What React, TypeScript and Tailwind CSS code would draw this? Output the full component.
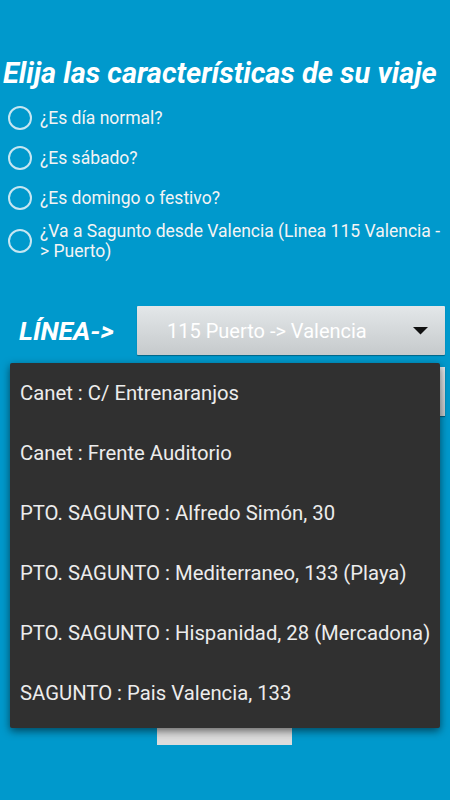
import React from 'react';

const font = { fontFamily: 'Roboto, "Noto Sans", sans-serif' };

const options = ['¿Es día normal?', '¿Es sábado?', '¿Es domingo o festivo?'];

const stops = [
  'Canet : C/ Entrenaranjos',
  'Canet : Frente Auditorio',
  'PTO. SAGUNTO : Alfredo Simón, 30',
  'PTO. SAGUNTO : Mediterraneo, 133 (Playa)',
  'PTO. SAGUNTO : Hispanidad, 28 (Mercadona)',
  'SAGUNTO : Pais Valencia, 133',
];

function Radio({ children, className = '' }: { children: React.ReactNode; className?: string }) {
  return (
    <label className={`flex items-center pl-[8px] pr-[2px] ${className}`}>
      <span className="shrink-0 w-[24px] h-[24px] rounded-full border-[2px] border-[#c6e6f2]" />
      <span className="ml-[8px] text-[17.5px] leading-[20px] text-[#f4f4f4] whitespace-nowrap">{children}</span>
    </label>
  );
}

export default function App() {
  return (
    <div className="relative w-[450px] h-[800px] overflow-hidden bg-[#0099cc]" style={font}>
      {/* Trip options */}
      <div className="pt-[53px]">
        <h1 className="pl-[3px] text-[29px] leading-[40px] font-bold italic text-white whitespace-nowrap">
          Elija las características de su viaje
        </h1>
        <div className="mt-[13px] flex flex-col gap-[16px]">
          {options.map((o) => (
            <Radio key={o}>{o}</Radio>
          ))}
        </div>
        <Radio className="mt-[11px]">
          ¿Va a Sagunto desde Valencia (Linea 115 Valencia -<br />&gt; Puerto)
        </Radio>
      </div>

      {/* Line selector */}
      <div className="mt-[45px] flex items-center">
        <span className="w-[137px] pl-[19px] text-[26.5px] font-bold italic text-white">LÍNEA-&gt;</span>
        <div className="flex-1 mr-[5px] h-[49px] flex items-center justify-between bg-gradient-to-b from-[#e3e7e9] to-[#c6cacc] shadow-[0_1px_1px_rgba(0,0,0,0.35)] rounded-[1px]">
          <span className="pl-[30px] text-[20px] text-white">115 Puerto -&gt; Valencia</span>
          <svg width="15" height="8" viewBox="0 0 15 8" className="mr-[17px]">
            <polygon points="0,0 15,0 7.5,7.5" fill="#111" />
          </svg>
        </div>
      </div>

      {/* Stop selector (covered by open menu) */}
      <div className="mt-[12px] ml-[137px] mr-[5px] h-[49px] bg-gradient-to-b from-[#e3e7e9] to-[#c6cacc] shadow-[0_1px_1px_rgba(0,0,0,0.35)]" />

      <div className="mt-[312px] ml-[157px] w-[135px] h-[17px] bg-[#dcdcdc]" />

      {/* Open dropdown menu */}
      <div className="absolute left-[10px] top-[363px] w-[430px] h-[365px] bg-[#303030] rounded-[2px] shadow-[0_3px_8px_rgba(0,0,0,0.55)]">
        {stops.map((s) => (
          <div key={s} className="h-[60px] flex items-center pl-[10px] text-[20.3px] text-[#ececec] whitespace-nowrap">
            {s}
          </div>
        ))}
      </div>
    </div>
  );
}
